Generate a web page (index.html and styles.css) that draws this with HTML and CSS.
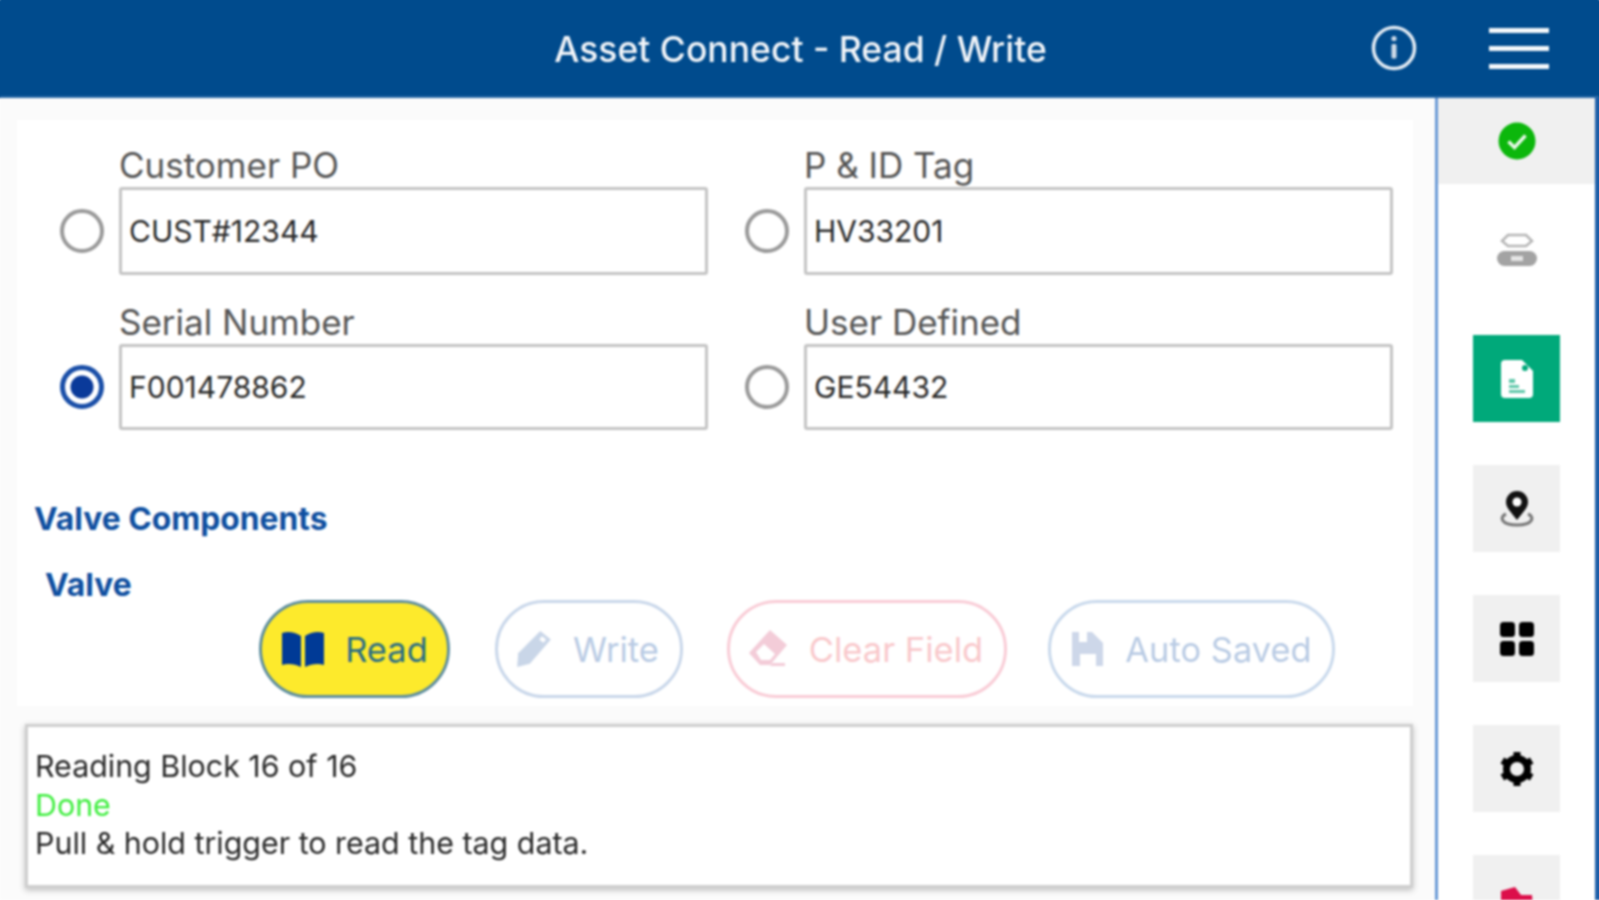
FILE: index.html
```html
<!DOCTYPE html>
<html lang="en">
<head>
<meta charset="utf-8">
<title>Asset Connect - Read / Write</title>
<link rel="stylesheet" href="styles.css">
</head>
<body>
<div class="app">
  <header class="topbar">
    <h1 class="title">Asset Connect - Read / Write</h1>
    <svg class="info" viewBox="0 0 46 46"><circle cx="23" cy="23" r="20.5" fill="none" stroke="#e4ecf4" stroke-width="3.500"/><circle cx="23" cy="13.500" r="2.600" fill="#cfdbe8"/><rect x="20.500" y="19" width="5" height="14.500" rx="1.500" fill="#cfdbe8"/></svg>
    <div class="menu"><span></span><span></span><span></span></div>
  </header>
  <div class="body">
    <main class="content">
      <section class="card">
        <div class="fields">
          <div class="field">
            <label class="flabel">Customer PO</label>
            <span class="radio"></span>
            <div class="input tall">CUST#12344</div>
          </div>
          <div class="field">
            <label class="flabel">P &amp; ID Tag</label>
            <span class="radio"></span>
            <div class="input tall">HV33201</div>
          </div>
          <div class="field">
            <label class="flabel">Serial Number</label>
            <span class="radio on"></span>
            <div class="input">F001478862</div>
          </div>
          <div class="field">
            <label class="flabel">User Defined</label>
            <span class="radio"></span>
            <div class="input">GE54432</div>
          </div>
        </div>
        <h2 class="section">Valve Components</h2>
        <h3 class="sub">Valve</h3>
        <div class="actions">
          <button class="btn read">
            <svg viewBox="0 0 44 38" class="ico-read"><path d="M1 3c6-2 13-1 19 3v31c-6-3-13-4-19-2z M24 6c6-4 13-5 19-3v32c-6-2-13-1-19 2z" fill="#003a96"/></svg>
            Read
          </button>
          <button class="btn write">
            <svg viewBox="0 0 36 38" class="ico-write"><path d="M24 2l10 8-20 23-12 3 1-13z" fill="#c9d6e8"/><path d="M25.500 7l4 3-2.500 3-4-3z" fill="#fff"/></svg>
            Write
          </button>
          <button class="btn clear">
            <svg viewBox="0 0 40 40" class="ico-clear"><path d="M22 1l17 15-17 20H12L1 24z" fill="#f3ccd8"/><path d="M8 23l8-8 11 10-5 6H13z" fill="#fff"/><path d="M24 34h13v3H22z" fill="#f3ccd8"/></svg>
            Clear Field
          </button>
          <button class="btn auto">
            <svg viewBox="0 0 34 38" class="ico-auto"><path d="M1 2h20l11 11v23H1z" fill="#cdd7e9"/><path d="M8 2h8v10H8zM9 24h16v12H9z" fill="#fff"/></svg>
            Auto Saved
          </button>
        </div>
      </section>
      <section class="status">
        <p class="line">Reading Block 16 of 16</p>
        <p class="line done">Done</p>
        <p class="line">Pull &amp; hold trigger to read the tag data.</p>
      </section>
    </main>
    <aside class="side">
      <div class="state">
        <svg viewBox="0 0 38 38" class="ic38"><circle cx="19" cy="19" r="18.500" fill="#0cb70c"/><path d="M10.500 19.500l6 6 11-12" fill="none" stroke="#e8f8e8" stroke-width="3.500"/></svg>
      </div>
      <div class="plain">
        <svg viewBox="0 0 40 36" class="ic-nfc"><path d="M5 10l6-6h18l6 6-6 5H11z" fill="none" stroke="#b5b5b5" stroke-width="2.500"/><rect x="0" y="20" width="40" height="15" rx="7.500" fill="#a3a3a3"/><rect x="14" y="25" width="12" height="5" fill="#e5e5e5"/></svg>
      </div>
      <div class="tile green">
        <svg viewBox="0 0 32 38" class="ic-doc"><path d="M4 0h17l11 11v23a4 4 0 0 1-4 4H4a4 4 0 0 1-4-4V4a4 4 0 0 1 4-4z" fill="#fff"/><circle cx="24" cy="8" r="3" fill="#00a97a"/><path d="M8 19h6v4H8zM8 25h10v3H8zM8 30h16v3H8z" fill="#5fc8aa"/></svg>
      </div>
      <div class="tile">
        <svg viewBox="0 0 34 36" class="ic-pin"><path d="M6 23c-7 3-5 11 11 11s18-8 11-11" fill="none" stroke="#777" stroke-width="3"/><path d="M17 29C11 21 6 17 6 11a11 11 0 0 1 22 0c0 6-5 10-11 18z" fill="#111"/><circle cx="17" cy="11" r="4.500" fill="#fff"/></svg>
      </div>
      <div class="tile">
        <svg viewBox="0 0 34 34" class="ic-grid"><rect width="15" height="15" rx="3.500" fill="#000"/><rect x="19" width="15" height="15" rx="3.500" fill="#000"/><rect y="19" width="15" height="15" rx="3.500" fill="#000"/><rect x="19" y="19" width="15" height="15" rx="3.500" fill="#000"/></svg>
      </div>
      <div class="tile">
        <svg viewBox="0 0 34 34" class="ic-gear"><circle cx="17" cy="17" r="10.500" fill="none" stroke="#000" stroke-width="7"/><g stroke="#000" stroke-width="7"><path d="M17 0v6M17 28v6M2.300 8.500l5.200 3M26.500 22.500l5.200 3M2.300 25.500l5.200-3M26.500 11.500l5.200-3"/></g></svg>
      </div>
      <div class="tile">
        <svg viewBox="0 0 34 34" class="ic-red"><path d="M1 5l14-4 6 8h11l2 25H1z" fill="#dc0f4a"/></svg>
      </div>
    </aside>
  </div>
</div>
</body>
</html>
```
FILE: styles.css
```css
* { box-sizing: border-box; }
html, body { margin: 0; height: 100%; overflow: hidden; background: #fff; }
body { font-family: Inter, Roboto, "Liberation Sans", sans-serif; }
.app { width: 1599px; height: 900px; display: flex; flex-direction: column; filter: blur(1.2px); }

.topbar { height: 98px; flex: none; background: #004b8d; border-bottom: 2px solid #2a6aa8; display: flex; align-items: center; position: relative; padding-right: 50px; box-shadow: 0 -8px 0 #004b8d, -8px 0 0 #004b8d, 8px 0 0 #004b8d; }
.title { position: absolute; left: 0; right: 0; margin: 0; text-align: center; color: #f2f5f9; font-size: 35.500px; font-weight: 500; padding-left: 2px; top: 28px; line-height: 44px; }
.info { width: 46px; height: 46px; margin-left: auto; margin-right: 72px; position: relative; }
.menu { width: 60px; display: flex; flex-direction: column; gap: 13px; position: relative; }
.menu span { display: block; height: 5px; background: #f4f7fa; }

.body { flex: 1; display: flex; min-height: 0; position: relative; }
.content { width: 1435px; flex: none; background: #fbfbfb; padding: 22px 22px 0 17px; }
.card { background: #fff; height: 586px; padding-top: 28px; }
.fields { display: grid; grid-template-columns: 648px 648px; column-gap: 37px; row-gap: 30px; margin-left: 43px; }
.field { display: grid; grid-template-columns: 44px 589px; column-gap: 15px; align-items: center; }
.flabel { grid-column: 2; font-size: 35px; line-height: 34px; height: 39px; color: #555; }
.radio { width: 44px; height: 44px; border-radius: 50%; border: 4px solid #9a9a9a; background: #fff; }
.radio.on { border: 5px solid #1a4fa8; background: radial-gradient(circle, #0a3a9a 0 11px, #fff 12px); }
.input { height: 86px; border: 3px solid #c4c4c4; border-radius: 3px; background: #fff; font-size: 30px; color: #2a2a2a; padding-left: 7px; display: flex; align-items: center; }
.input.tall { height: 88px; }

.section { margin: 69px 0 0 17px; font-size: 31.800px; line-height: 40px; font-weight: 700; color: #0f4fa0; }
.sub { margin: 28px 0 0 28px; font-size: 31.800px; line-height: 36px; font-weight: 700; color: #0f4fa0; height: 33px; }
.actions { display: flex; margin-left: 242px; }
.btn { height: 98px; border-radius: 49px; background: #fff; font: 400 34.500px Inter, Roboto, "Liberation Sans", sans-serif; display: flex; align-items: center; justify-content: center; gap: 20px; padding: 0; }
.btn svg { flex: none; }
.read { width: 191px; background: #fdea2c; border: 3px solid #5f8f9f; color: #2a6d85; }
.write { width: 188px; margin-left: 45px; border: 3px solid #c9d7ea; color: #b9cbe4; padding-right: 4px; }
.clear { width: 280px; margin-left: 44px; border: 3px solid #f9ccd6; color: #f9c8cb; padding-right: 4px; }
.auto { width: 287px; margin-left: 41px; border: 3px solid #c9d9ec; color: #b9cbe4; }
.ico-read { width: 44px; height: 38px; }
.ico-write { width: 38px; height: 40px; }
.ico-clear { width: 42px; height: 40px; }
.ico-auto { width: 34px; height: 38px; }

.status { margin: 18px 0 0 8px; height: 164px; background: #fff; border: 3px solid #cfcfcf; box-shadow: 0 2px 6px rgba(0,0,0,.25); padding: 20px 0 0 7px; }
.line { margin: 0; font-size: 30.400px; line-height: 38.500px; color: #2a2a2a; }
.line.done { color: #3fee3f; }

.side { flex: 1; display: flex; flex-direction: column; align-items: center; border-left: 3px solid #6a9ad6; border-right: 4px solid #1d5ea8; overflow: hidden; box-shadow: 8px 0 0 #1d5ea8; }
.state { align-self: stretch; flex: none; height: 86px; background: #f0f0f0; display: flex; align-items: center; justify-content: center; }
.plain { flex: none; height: 151px; display: flex; align-items: center; justify-content: center; padding-bottom: 22px; }
.tile { flex: none; width: 87px; height: 87px; background: #f0f0f0; margin-bottom: 43px; display: flex; align-items: center; justify-content: center; }
.tile.green { background: #00a97a; }
.ic38 { width: 38px; height: 38px; }
.ic-nfc { width: 40px; height: 36px; }
.ic-doc { width: 32px; height: 38px; }
.ic-pin { width: 34px; height: 36px; }
.ic-grid { width: 34px; height: 34px; }
.ic-gear { width: 34px; height: 34px; }
.ic-red { width: 34px; height: 34px; margin-top: 8px; }
```
